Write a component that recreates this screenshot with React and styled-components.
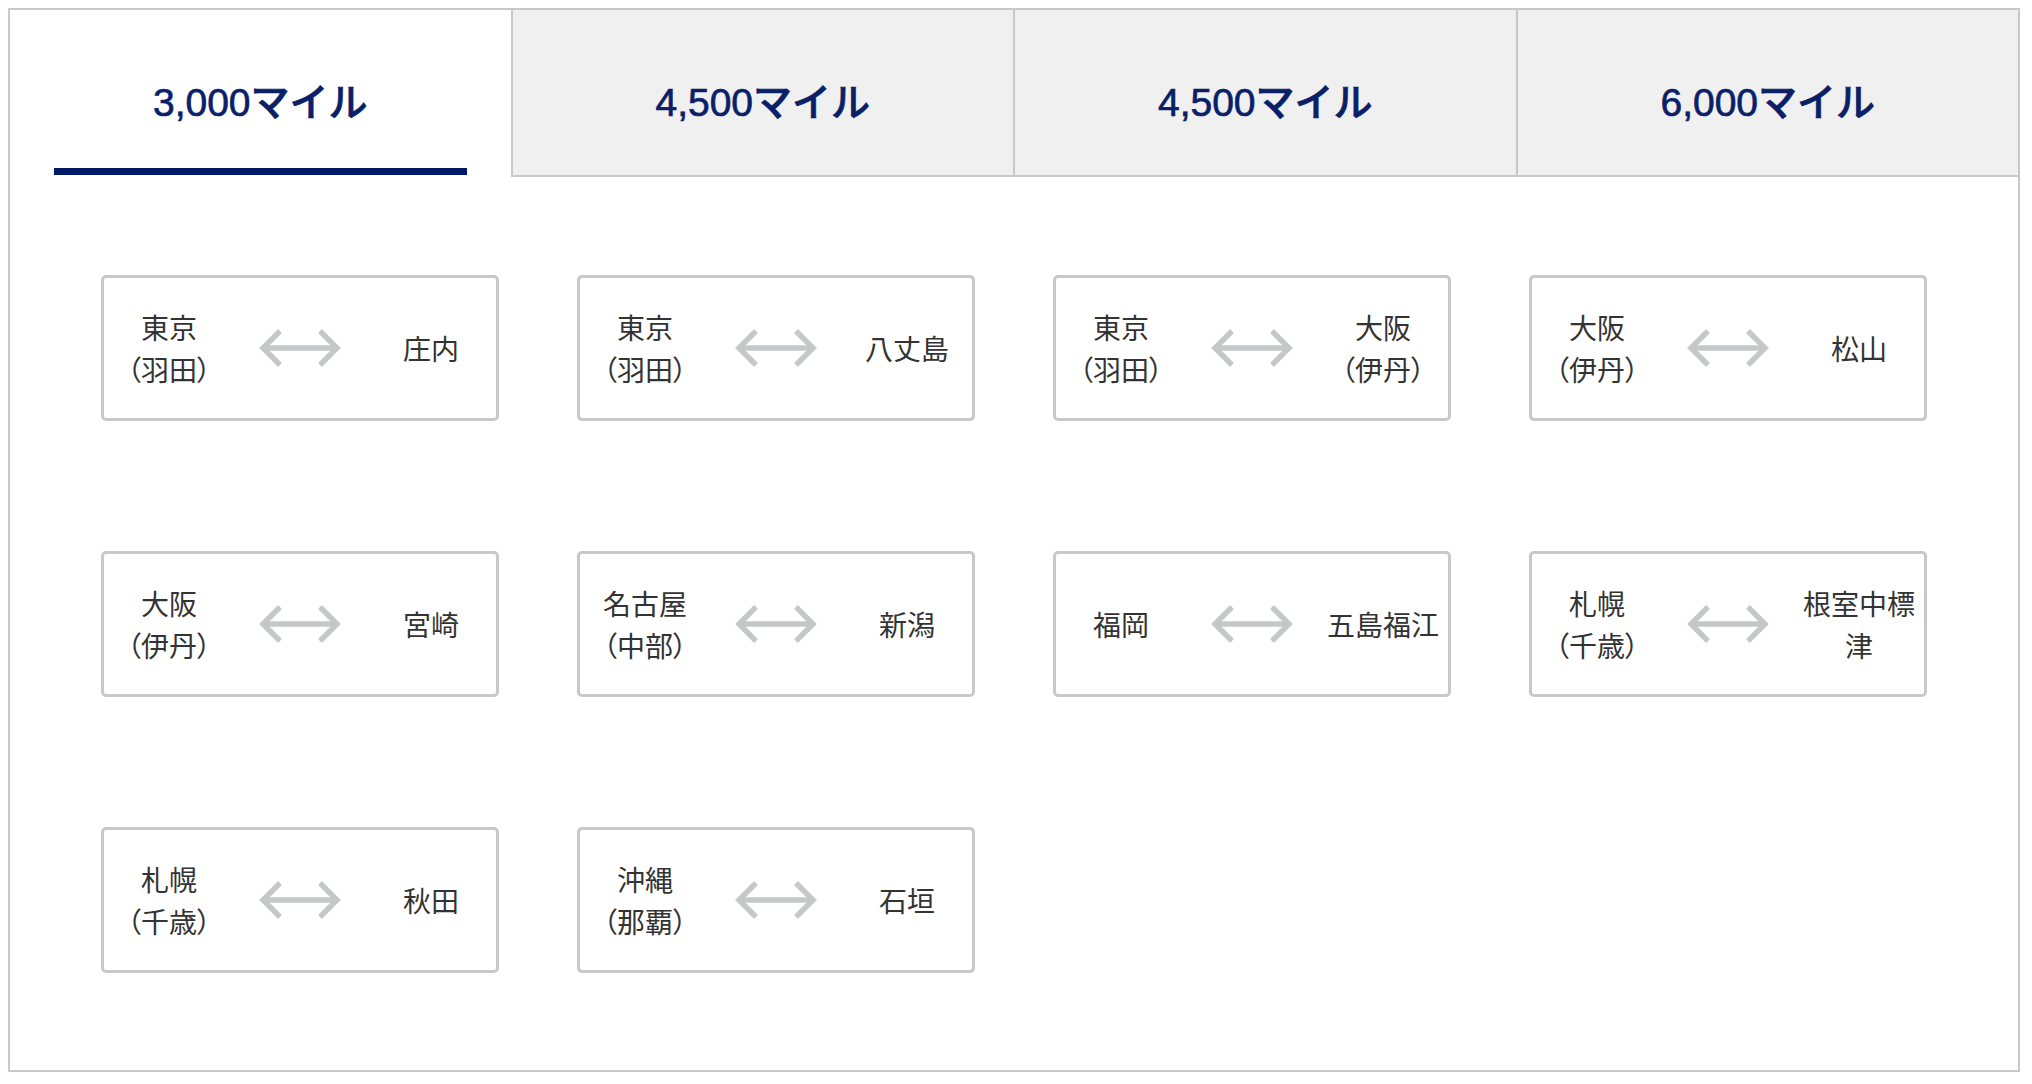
import styled, { createGlobalStyle } from "styled-components";

const GlobalStyle = createGlobalStyle`
  body {
    margin: 0;
    background: #ffffff;
    font-family: "Liberation Sans", "Noto Sans CJK JP", sans-serif;
  }
`;

const tabs = ["3,000マイル", "4,500マイル", "4,500マイル", "6,000マイル"];

const routes = [
  { from: ["東京", "（羽田）"], to: ["庄内"] },
  { from: ["東京", "（羽田）"], to: ["八丈島"] },
  { from: ["東京", "（羽田）"], to: ["大阪", "（伊丹）"] },
  { from: ["大阪", "（伊丹）"], to: ["松山"] },
  { from: ["大阪", "（伊丹）"], to: ["宮崎"] },
  { from: ["名古屋", "（中部）"], to: ["新潟"] },
  { from: ["福岡"], to: ["五島福江"] },
  { from: ["札幌", "（千歳）"], to: ["根室中標津"] },
  { from: ["札幌", "（千歳）"], to: ["秋田"] },
  { from: ["沖縄", "（那覇）"], to: ["石垣"] },
];

function Arrow() {
  return (
    <svg width="84" height="40" viewBox="0 0 84 40" fill="none">
      <g stroke="#c6c7c9" strokeWidth="5.5" strokeLinejoin="miter">
        <path d="M4 20 H80" />
        <path d="M22 3 L5 20 L22 37" />
        <path d="M62 3 L79 20 L62 37" />
      </g>
    </svg>
  );
}

export default function App() {
  const active = 0;
  return (
    <>
      <GlobalStyle />
      <Box>
        <TabBar>
          {tabs.map((label, i) => (
            <Tab key={i} $active={i === active}>
              {label}
            </Tab>
          ))}
        </TabBar>
        <Grid>
          {routes.map((r, i) => (
            <Card key={i}>
              <Place>
                {r.from.map((line, j) => (
                  <Line key={j}>{line}</Line>
                ))}
              </Place>
              <ArrowCell>
                <Arrow />
              </ArrowCell>
              <Place>
                {r.to.map((line, j) => (
                  <Line key={j}>{line}</Line>
                ))}
              </Place>
            </Card>
          ))}
        </Grid>
      </Box>
    </>
  );
}

const Box = styled.div`
  box-sizing: border-box;
  width: 2012px;
  height: 1064px;
  margin: 8px;
  border: 2px solid #c8c8c8;
  display: flex;
  flex-direction: column;
`;

const TabBar = styled.div`
  display: flex;
`;

const Tab = styled.div`
  position: relative;
  flex: 1;
  box-sizing: border-box;
  height: 167px;
  padding-top: 12px;
  display: flex;
  align-items: center;
  justify-content: center;
  font-size: 39px;
  font-weight: 500;
  -webkit-text-stroke: 0.7px currentColor;
  color: #0a1f68;
  background: ${(p) => (p.$active ? "#ffffff" : "#f0f0f0")};
  border-bottom: 2px solid ${(p) => (p.$active ? "#ffffff" : "#c8c8c8")};
  & + & {
    border-left: 2px solid #c8c8c8;
  }
  &::after {
    content: "";
    display: ${(p) => (p.$active ? "block" : "none")};
    position: absolute;
    left: 44px;
    right: 44px;
    bottom: 0;
    height: 7px;
    background: #001966;
  }
`;

const Grid = styled.div`
  display: grid;
  grid-template-columns: repeat(4, 398px);
  grid-auto-rows: 146px;
  column-gap: 78px;
  row-gap: 130px;
  justify-content: center;
  padding-top: 98px;
`;

const Card = styled.div`
  box-sizing: border-box;
  border: 3px solid #c8c8c8;
  border-radius: 5px;
  padding: 0 4px;
  display: grid;
  grid-template-columns: 122px 1fr 122px;
  align-items: center;
  font-family: "Noto Sans CJK JP", sans-serif;
  font-feature-settings: "palt";
  font-size: 28px;
  line-height: 42px;
  color: #333333;
`;

const Place = styled.div`
  text-align: center;
`;

const Line = styled.div``;

const ArrowCell = styled.div`
  display: flex;
  justify-content: center;
  align-items: center;
`;
